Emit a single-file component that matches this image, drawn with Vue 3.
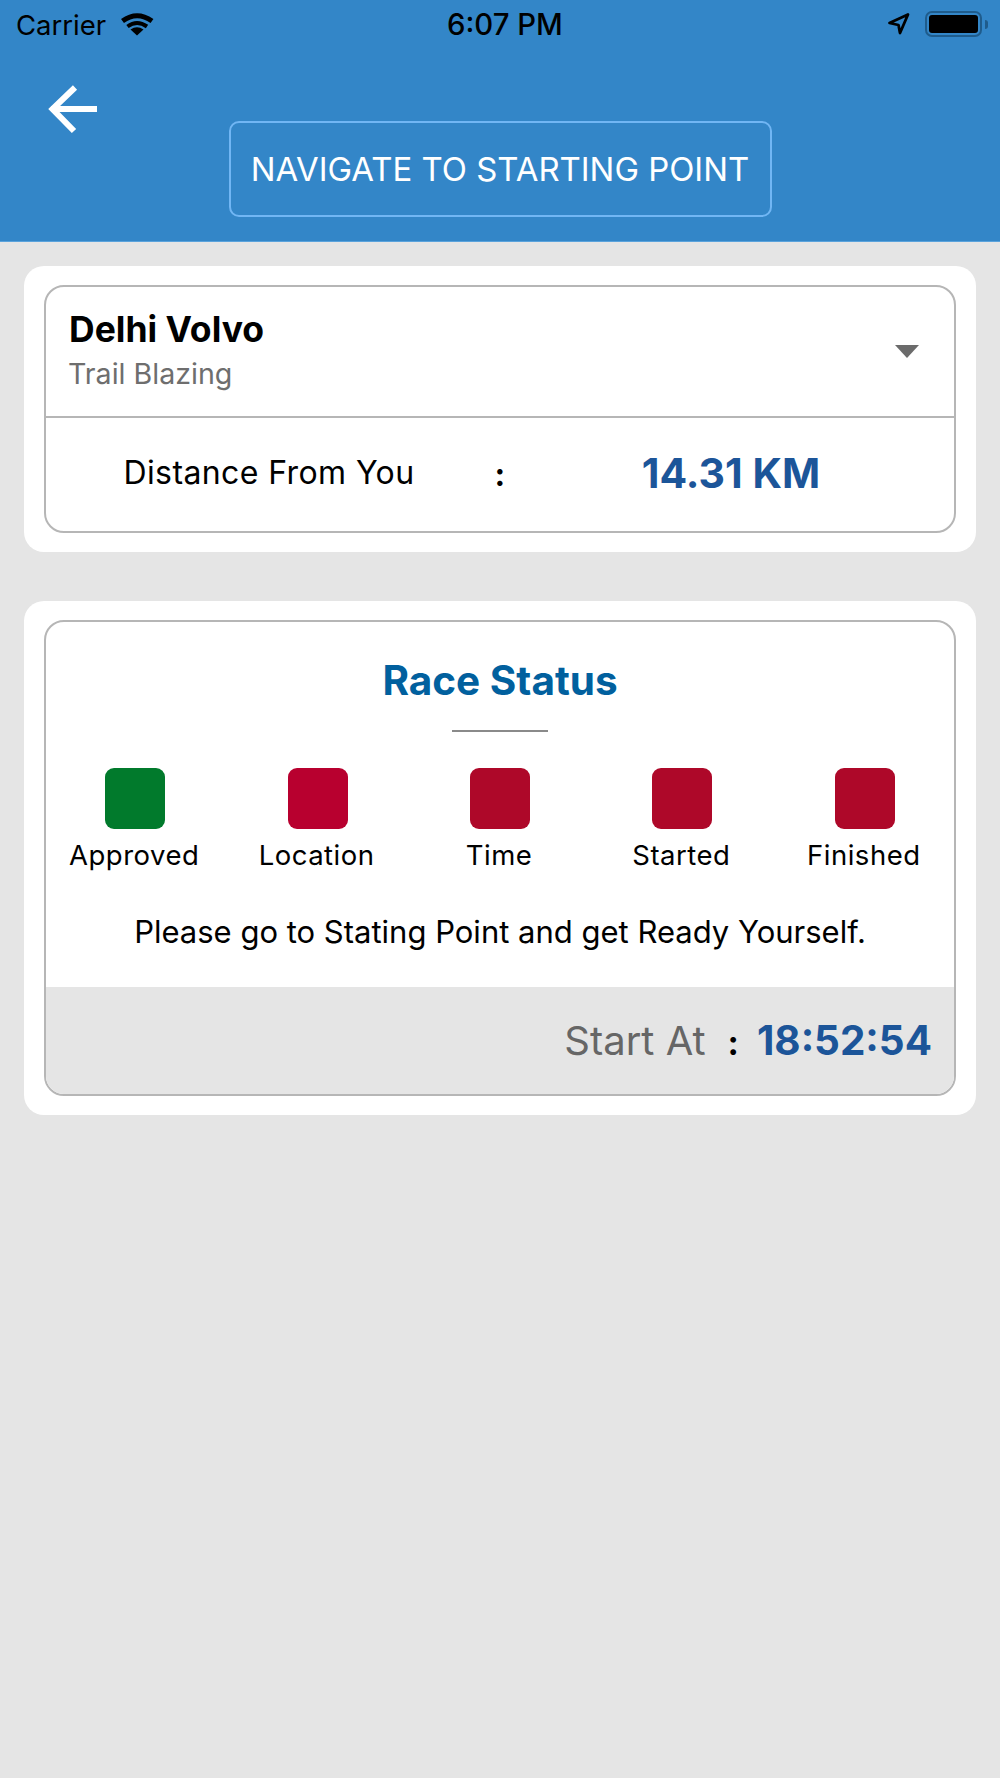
<template>
  <div class="page">
    <header class="header">
      <div class="status">
        <div class="status-left">
          <span class="carrier">Carrier</span>
          <svg class="wifi" width="35" height="25" viewBox="0 0 35 25">
            <path d="M2.500 9 Q17 -1.500 32 9" fill="none" stroke="#000" stroke-width="5"/>
            <path d="M7.500 14.500 Q17 7.500 27 14.500" fill="none" stroke="#000" stroke-width="4"/>
            <path d="M17 23.500 L10.500 17.500 Q17 13 23.500 17.500Z" fill="#000"/>
          </svg>
        </div>
        <span class="time">6:07 PM</span>
        <div class="status-right">
          <svg class="arrow-loc" width="24" height="24" viewBox="0 0 24 24">
            <path d="M21 2.500 L2.500 11 L11.500 13 L13 21Z" fill="none" stroke="#000" stroke-width="2.800" stroke-linejoin="round"/>
          </svg>
          <div class="battery"><div class="battery-fill"></div></div>
          <div class="battery-tip"></div>
        </div>
      </div>
      <div class="header-body">
        <svg class="back" width="50" height="50" viewBox="0 0 50 50">
          <path d="M49 25 H3 M27 3.500 L4.500 25 L26 47" fill="none" stroke="#fff" stroke-width="6"/>
        </svg>
        <button class="nav-btn">NAVIGATE TO STARTING POINT</button>
      </div>
    </header>

    <main class="content">
      <section class="card">
        <div class="inner">
          <div class="race-head">
            <div>
              <div class="race-name">Delhi Volvo</div>
              <div class="race-type">Trail Blazing</div>
            </div>
            <div class="caret"></div>
          </div>
          <div class="distance">
            <span class="distance-label">Distance From You</span>
            <span class="distance-colon">:</span>
            <span class="distance-value">14.31 KM</span>
          </div>
        </div>
      </section>

      <section class="card">
        <div class="inner">
          <h2 class="title">Race Status</h2>
          <div class="rule"></div>
          <div class="steps">
            <div v-for="s in steps" :key="s.label" class="step">
              <div class="square" :style="{ background: s.color }"></div>
              <div class="step-label">{{ s.label }}</div>
            </div>
          </div>
          <p class="message">Please go to Stating Point and get Ready Yourself.</p>
          <div class="footer">
            <span class="start-label">Start At</span>
            <span class="start-colon">:</span>
            <span class="start-value">18:52:54</span>
          </div>
        </div>
      </section>
    </main>
  </div>
</template>

<script setup>
const steps = [
  { label: 'Approved', color: '#017a2c' },
  { label: 'Location', color: '#b8002f' },
  { label: 'Time', color: '#ae0829' },
  { label: 'Started', color: '#ae0829' },
  { label: 'Finished', color: '#ae0829' },
]
</script>

<style>
html, body { margin: 0; background: #e5e5e5; }
</style>

<style scoped>
.page {
  width: 1000px;
  min-height: 1778px;
  background: #e5e5e5;
  font-family: Inter, "Liberation Sans", sans-serif;
  color: #000;
}
.header {
  height: 242px;
  box-sizing: border-box;
  background: #3386c8;
  border-bottom: 1px solid #5aa3dc;
}
.status {
  height: 50px;
  display: flex;
  align-items: center;
  justify-content: space-between;
  position: relative;
  padding: 0 12px 0 16px;
}
.status-left { display: flex; align-items: center; gap: 14px; }
.carrier { font-size: 27.500px; line-height: 50px; }
.wifi { margin-top: -1px; }
.time {
  position: absolute;
  left: 447px;
  font-size: 29.300px;
  font-weight: 500;
  line-height: 50px;
}
.status-right { display: flex; align-items: center; padding-bottom: 2px; }
.arrow-loc { margin-right: 14px; }
.battery {
  width: 57px;
  height: 26px;
  box-sizing: border-box;
  border: 2.500px solid #1f5c8c;
  border-radius: 7px;
  padding: 2px;
}
.battery-fill { height: 100%; background: #000; border-radius: 3px; }
.battery-tip {
  width: 3px;
  height: 9px;
  margin-left: 3px;
  background: #1f5c8c;
  border-radius: 0 4px 4px 0;
}
.header-body {
  position: relative;
  display: flex;
  justify-content: center;
  padding-top: 71px;
}
.back { position: absolute; left: 48px; top: 34px; }
.nav-btn {
  width: 543px;
  height: 96px;
  box-sizing: border-box;
  background: transparent;
  border: 2px solid #71b6f4;
  border-radius: 10px;
  color: #fff;
  font-family: inherit;
  font-size: 32.900px;
  font-weight: 400;
  padding: 0;
}
.content {
  display: flex;
  flex-direction: column;
  gap: 49px;
  padding: 24px 24px 0;
}
.card {
  background: #fff;
  border-radius: 20px;
  padding: 19px 20px;
}
.inner {
  border: 2px solid #b6b6b6;
  border-radius: 20px;
  overflow: hidden;
  background: #fff;
}
.race-head {
  height: 131px;
  box-sizing: border-box;
  display: flex;
  align-items: center;
  justify-content: space-between;
  padding: 0 35px 0 22px;
  border-bottom: 2px solid #b6b6b6;
}
.race-name { font-size: 35.500px; font-weight: 700; line-height: 40px; margin-left: 1px; }
.race-type { font-size: 28.600px; line-height: 38px; margin-top: 5px; color: #6e6e6e; }
.caret {
  width: 0;
  height: 0;
  border-left: 12px solid transparent;
  border-right: 12px solid transparent;
  border-top: 13px solid #6b6b6b;
}
.distance {
  height: 113px;
  display: grid;
  grid-template-columns: 1fr 32px 1fr;
  align-items: center;
  text-align: center;
  padding: 0 8px 4px;
  box-sizing: border-box;
  font-size: 32px;
  letter-spacing: 0.400px;
}
.distance-value { font-size: 41px; font-weight: 700; color: #1c5599; letter-spacing: 0; }
.distance-colon { font-weight: 700; margin-top: 3px; }
.title {
  margin: 0;
  text-align: center;
  font-size: 40.500px;
  font-weight: 700;
  line-height: 46px;
  padding-top: 36px;
  color: #01609e;
}
.rule { width: 96px; height: 2px; background: #8a8a8a; margin: 26px auto 0; }
.steps {
  display: grid;
  grid-template-columns: repeat(5, 1fr);
  margin: 36px -2px 0;
}
.step { display: flex; flex-direction: column; align-items: center; }
.square { width: 60px; height: 61px; border-radius: 9px; }
.step-label { font-size: 27.500px; letter-spacing: 0.500px; line-height: 34px; margin: 9px 2px 0 0; white-space: nowrap; }
.message {
  margin: 40px 0 0;
  text-align: center;
  font-size: 31px;
  line-height: 40px;
}
.footer {
  height: 107px;
  margin-top: 35px;
  box-sizing: border-box;
  background: #e5e5e5;
  display: flex;
  align-items: center;
  justify-content: flex-end;
  padding: 0 22px 0 0;
}
.start-label { font-size: 40px; color: #666; }
.start-colon { font-size: 34px; font-weight: 700; margin: 4px 18px 0 22px; }
.start-value { font-size: 40.400px; font-weight: 700; color: #1c5599; }
</style>
